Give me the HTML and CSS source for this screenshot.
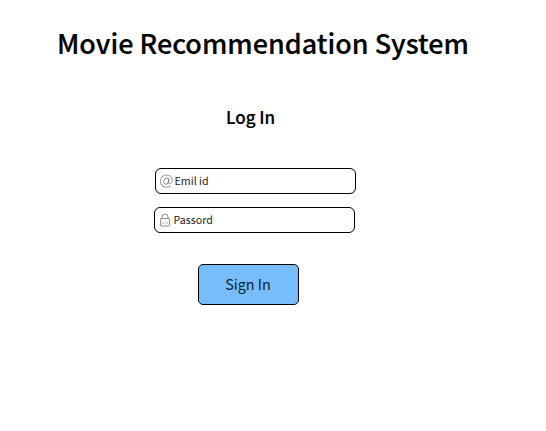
FILE: index.html
```html
<!DOCTYPE html>
<html lang="en">
<head>
<meta charset="utf-8">
<title>Movie Recommendation System</title>
<link rel="stylesheet" href="styles.css">
</head>
<body>
<main class="page">
  <h1 class="title">Movie Recommendation System</h1>
  <h2 class="subtitle">Log In</h2>
  <form class="form">
    <label class="field field-email">
      <svg class="icon" viewBox="0 0 14 14"><ellipse cx="6.200" cy="7.200" rx="2.400" ry="3.200" transform="rotate(20 6.200 7.200)"/><path d="M9.200 4 8.400 8.500c-.3 2.200 3.900 1.500 3.900-2.500C12.300 3 9.900 1 6.700 1 3.100 1 .4 3.600 .4 7.200s2.500 6 5.900 6c1.600 0 2.900-.400 4-1.200"/></svg>
      <span>Emil id</span>
    </label>
    <label class="field field-password">
      <svg class="icon" viewBox="0 0 14 14"><rect x="1.500" y="5.500" width="9" height="7.500" rx=".5"/><path d="M3 5.500V4a3 3 0 0 1 6 0v1.500"/><path d="M3 10h6" stroke-dasharray="1 .7"/></svg>
      <span>Passord</span>
    </label>
    <button class="submit" type="button">Sign In</button>
  </form>
</main>
</body>
</html>
```
FILE: styles.css
```css
* { box-sizing: border-box; }
body {
  margin: 0;
  background: #fff;
  color: #000;
  font-family: "Noto Sans CJK SC", sans-serif;
}
.page {
  display: flex;
  flex-direction: column;
  align-items: flex-start;
  padding: 23px 0 0 57px;
}
.title {
  margin: 0;
  font-size: 26.950px;
  font-weight: 500;
  line-height: 40px;
  white-space: nowrap;
  -webkit-text-stroke: .2px #000;
}
.subtitle {
  margin: 42px 0 0 169px;
  font-size: 17px;
  font-weight: 500;
  line-height: 24px;
  -webkit-text-stroke: .2px #000;
}
.form {
  display: flex;
  flex-direction: column;
  align-items: flex-start;
  margin: 39px 0 0 97px;
}
.field {
  display: flex;
  align-items: center;
  width: 201px;
  height: 26px;
  padding: 0 0 1px 4px;
  border: 1px solid #000;
  border-radius: 6px;
  font-size: 10.700px;
  line-height: 16px;
  color: #222;
}
.field-email { margin-left: 1px; }
.field-password { margin-top: 13px; }
.icon {
  width: 14px;
  height: 14px;
  margin-right: .5px;
  fill: none;
  stroke: #777;
  stroke-width: .8;
}
.submit {
  width: 101px;
  height: 41px;
  margin: 31px 0 0 44px;
  padding: 0 1px 1px 0;
  border: 1px solid #000;
  border-radius: 5px;
  background: #78bdfb;
  color: #0d2236;
  font: 14.400px/36px "Noto Sans CJK SC", sans-serif;
}
```
